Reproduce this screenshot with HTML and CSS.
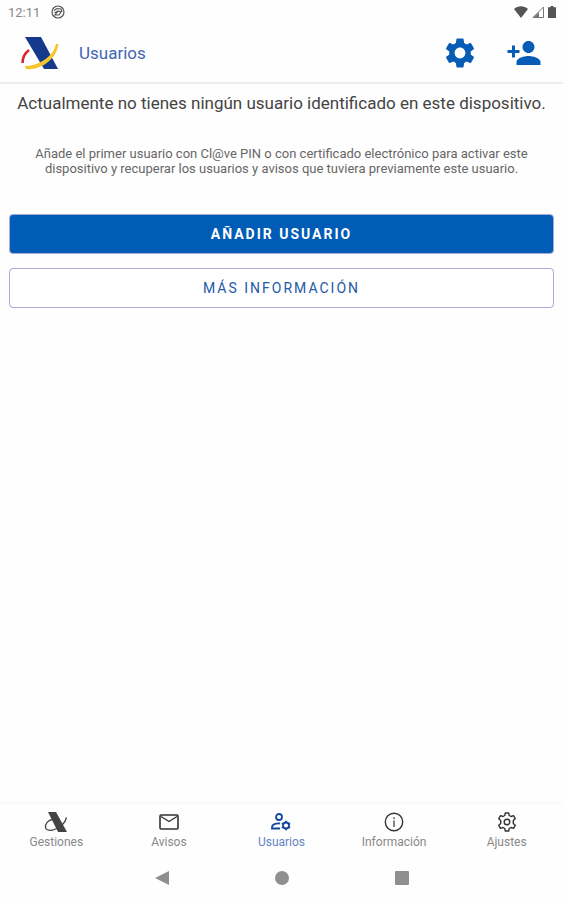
FILE: index.html
```html
<!DOCTYPE html>
<html lang="es">
<head>
    <meta charset="UTF-8">
    <meta name="viewport" content="width=device-width, initial-scale=1.0">
    <title>Usuarios</title>
    <link rel="stylesheet" href="styles.css">
</head>
<body>
    <div class="status-bar">
        <span class="clock">12:11</span>
        <svg class="status-app" viewBox="0 0 14 14" fill="none" stroke="#555" stroke-width="1.2">
            <circle cx="7" cy="7" r="6"/>
            <path d="M3 5.5 6 3.5l4 .5 1 3M4 10l3-4 3 1-2 3zM3.5 8 7 6"/>
        </svg>
        <div class="status-icons">
            <svg width="14" height="12" viewBox="0 0 14 12"><path fill="#555" d="M0 3C4-.6 10-.6 14 3L7 12z"/></svg>
            <svg width="12" height="12" viewBox="0 0 12 12"><path fill="none" stroke="#777" d="M1 11.500 11.500 1v10.500z"/><path fill="#777" d="M1 11.500 7 6v5.500z"/></svg>
            <svg width="8" height="12" viewBox="0 0 8 12"><path fill="#555" d="M2.500 0h3v1.300H8V12H0V1.300h2.500z"/></svg>
        </div>
    </div>

    <header class="top-bar">
        <svg class="logo" viewBox="0 0 38 34">
            <path fill="#153a8c" d="M4 1h16l17 32H23z"/>
            <path fill="none" stroke="#e0202b" stroke-width="2.500" d="M8 14C4 17 1.500 21 1.500 27"/>
            <path fill="#f5c52c" d="M4 30C16 30 32 22 35 8h2.500C36 22 20 35 5 33z"/>
        </svg>
        <h1>Usuarios</h1>
        <div class="top-actions">
            <button class="icon-button" aria-label="Ajustes">
                <svg viewBox="0 0 24 24"><path d="M19.140 12.940c.04-.3.06-.61.06-.94 0-.32-.02-.64-.07-.94l2.030-1.580c.18-.14.23-.41.12-.61l-1.920-3.320c-.12-.22-.37-.29-.59-.22l-2.390.96c-.5-.38-1.030-.7-1.620-.94l-.36-2.540c-.04-.24-.24-.41-.48-.41h-3.840c-.24 0-.43.17-.47.41l-.36 2.540c-.59.24-1.130.57-1.620.94l-2.390-.96c-.22-.08-.47 0-.59.22L2.740 8.870c-.12.21-.08.47.12.61l2.030 1.580c-.05.3-.09.63-.09.94s.02.64.07.94l-2.030 1.580c-.18.14-.23.41-.12.61l1.920 3.320c.12.22.37.29.59.22l2.390-.96c.5.38 1.030.7 1.620.94l.36 2.540c.05.24.24.41.48.41h3.840c.24 0 .44-.17.47-.41l.36-2.540c.59-.24 1.130-.56 1.620-.94l2.390.96c.22.08.47 0 .59-.22l1.920-3.320c.12-.22.07-.47-.12-.61l-2.010-1.580zM12 15.600c-1.980 0-3.600-1.620-3.600-3.600s1.620-3.600 3.600-3.600 3.600 1.620 3.600 3.600-1.620 3.600-3.600 3.600z"/></svg>
            </button>
            <button class="icon-button" aria-label="Añadir usuario">
                <svg viewBox="0 0 24 24"><path d="M15 12c2.210 0 4-1.790 4-4s-1.790-4-4-4-4 1.790-4 4 1.790 4 4 4zm-9-2V7H4v3H1v2h3v3h2v-3h3v-2H6zm9 4c-2.670 0-8 1.340-8 4v2h16v-2c0-2.660-5.330-4-8-4z"/></svg>
            </button>
        </div>
    </header>

    <main class="content">
        <p class="message">Actualmente no tienes ningún usuario identificado en este dispositivo.</p>
        <p class="hint">Añade el primer usuario con Cl@ve PIN o con certificado electrónico para activar este dispositivo y recuperar los usuarios y avisos que tuviera previamente este usuario.</p>
        <button class="btn btn-primary">AÑADIR USUARIO</button>
        <button class="btn btn-outline">MÁS INFORMACIÓN</button>
    </main>

    <nav class="tabs">
        <a href="#gestiones" class="tab">
            <svg viewBox="0 0 24 20">
                <path fill="#444" d="M4 0h8l11 20h-9z"/>
                <path fill="none" stroke="#444" stroke-width="1.300" d="M8.500 7.500C4 8 1 12 1.500 15.500c.5 3 5 3.500 9 2 5-2 10.500-6 12-12"/>
            </svg>
            Gestiones
        </a>
        <a href="#avisos" class="tab">
            <svg viewBox="0 0 24 20" fill="none" stroke="#333" stroke-width="1.600">
                <rect x="3" y="3" width="18" height="14" rx="1"/>
                <path stroke-width="1.300" d="M4 4.500 12 9.500l8-5"/>
            </svg>
            Avisos
        </a>
        <a href="#usuarios" class="tab active">
            <svg viewBox="0 0 24 20" fill="none" stroke="#1646a0" stroke-width="1.800">
                <circle cx="10" cy="5" r="3"/>
                <path d="M11 11.500C7 11 3 12.500 3 15v1.500h8"/>
                <circle cx="17" cy="13.500" r="3"/>
                <path stroke-width="1.800" d="M17 8.800v2M17 16.200v2M12.900 11.200l1.700 1M19.400 14.800l1.700 1M12.900 15.800l1.700-1M19.400 12.200l1.700-1"/>
            </svg>
            Usuarios
        </a>
        <a href="#informacion" class="tab">
            <svg viewBox="0 0 24 20" fill="none" stroke="#333" stroke-width="1.400">
                <circle cx="12" cy="10" r="8.700"/>
                <path stroke="#777" stroke-width="1.800" d="M12 5.200V7M12 8.500V15"/>
            </svg>
            Información
        </a>
        <a href="#ajustes" class="tab">
            <svg viewBox="0 0 24 20" fill="none" stroke="#333" stroke-width="1.400" stroke-linejoin="round">
                <circle cx="12" cy="10" r="2.800"/>
                <path d="M10.300 1h3.400l.5 2.500 1.800 1 2.500-.8 1.700 3L18.300 8.500v3l1.900 1.800-1.700 3-2.500-.8-1.800 1-.5 2.500h-3.400l-.5-2.500-1.800-1-2.500.8-1.700-3 1.900-1.800v-3L3.800 6.700l1.700-3 2.500.8 1.800-1z"/>
            </svg>
            Ajustes
        </a>
    </nav>

    <div class="system-nav">
        <svg viewBox="0 0 14 14"><path d="M14 0v14L0 7z"/></svg>
        <svg viewBox="0 0 14 14"><circle cx="7" cy="7" r="7"/></svg>
        <svg viewBox="0 0 14 14"><rect width="14" height="14" rx="1"/></svg>
    </div>
</body>
</html>
```
FILE: styles.css
```css
*{
    margin: 0;
    padding: 0;
    box-sizing: border-box;
}
body{
    min-height: 100vh;
    display: flex;
    flex-direction: column;
    background: #fefefe;
    font-family: Roboto, "Liberation Sans", sans-serif;
    color: #444;
}
svg{
    display: block;
}
button{
    font-family: inherit;
    cursor: pointer;
}

.status-bar{
    display: flex;
    align-items: center;
    height: 24px;
    padding: 0 7px 0 8px;
}
.clock{
    font-size: 13px;
    color: #888;
}
.status-app{
    width: 14px;
    height: 14px;
    margin-left: 11px;
}
.status-icons{
    display: flex;
    gap: 4px;
    margin-left: auto;
}

.top-bar{
    display: flex;
    align-items: center;
    height: 60px;
    padding: 0 21px;
    border-bottom: 2px solid #ececec;
}
.logo{
    width: 38px;
    height: 34px;
}
.top-bar h1{
    margin-left: 20px;
    font-size: 17px;
    font-weight: 400;
    color: #4068b2;
}
.top-actions{
    display: flex;
    gap: 28px;
    margin-left: auto;
}
.icon-button{
    width: 36px;
    height: 36px;
    border: none;
    background: none;
    fill: #075cb5;
}

.content{
    flex: 1;
    display: flex;
    flex-direction: column;
    padding: 8px 9px;
    text-align: center;
}
.message{
    font-size: 17px;
    line-height: 22px;
}
.hint{
    margin: 32px 16px;
    font-size: 13px;
    line-height: 15px;
    color: #666;
}
.btn{
    height: 40px;
    border: 1px solid #a9abd6;
    border-radius: 4px;
    font-size: 14px;
    letter-spacing: 2px;
}
.btn-primary{
    margin: 6px 0 14px;
    background: #005cb5;
    color: #fff;
    font-weight: 700;
}
.btn-outline{
    background: #fff;
    color: #2459a8;
}

.tabs{
    display: flex;
    height: 56px;
    border-top: 2px solid #f8f8f8;
}
.tab{
    flex: 1;
    display: flex;
    flex-direction: column;
    align-items: center;
    gap: 4px;
    padding-top: 8px;
    font-size: 12px;
    line-height: 13px;
    color: #888;
    text-decoration: none;
}
.tab svg{
    width: 24px;
    height: 20px;
}
.tab.active{
    color: #6484c4;
}

.system-nav{
    display: flex;
    justify-content: center;
    gap: 106px;
    height: 42px;
    padding-top: 13px;
}
.system-nav svg{
    width: 14px;
    height: 14px;
    fill: #8f8f8f;
}
```
